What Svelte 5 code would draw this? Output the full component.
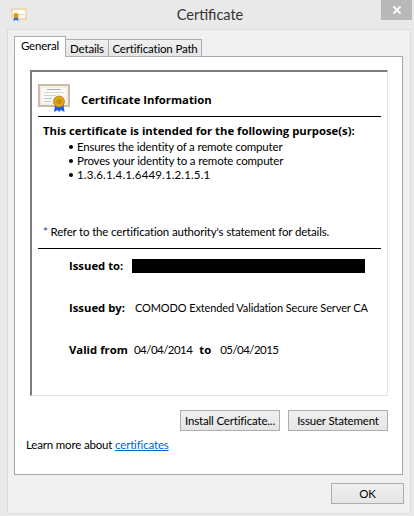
<script lang="ts">
	const purposes = [
		'Ensures the identity of a remote computer',
		'Proves your identity to a remote computer',
		'1.3.6.1.4.1.6449.1.2.1.5.1',
	];
</script>

<div class="dialog">
	<header class="titlebar">
		<svg class="title-icon" width="16" height="14" viewBox="0 0 16 14">
			<rect x="1" y="1" width="14" height="10" fill="#fdf6e8" stroke="#ecd3ab" stroke-width="1.5" />
			<rect x="7" y="3" width="6" height="2" fill="#fff" />
			<rect x="7" y="6" width="6" height="1" fill="#e8e0d0" />
			<path d="M3 9 L2.500 13 L5 12 L7.500 13 L7 9 Z" fill="#3a6fd8" />
			<circle cx="5" cy="7.500" r="2.500" fill="#dc9a14" />
		</svg>
		<span class="title">Certificate</span>
		<button class="close" aria-label="Close">
			<svg width="10" height="10" viewBox="0 0 10 10">
				<path d="M1.500 1.500 L8.500 8.500 M8.500 1.500 L1.500 8.500" stroke="#fff" stroke-width="1.800" />
			</svg>
		</button>
	</header>

	<div class="panel">
		<div class="tabs">
			<span class="tab active">General</span>
			<span class="tab details">Details</span>
			<span class="tab path">Certification Path</span>
		</div>

		<section class="page">
			<div class="box">
				<div class="info-head">
					<svg class="cert-icon" width="33" height="29" viewBox="0 0 33 29">
						<rect x="1" y="1" width="30" height="21" fill="#f7f5ef" stroke="#c9bda6" stroke-width="2" />
						<rect x="3" y="3" width="26" height="17" fill="#fbfaf7" stroke="#e2dccd" stroke-width="0.600" />
						<rect x="9" y="5" width="14" height="1" fill="#aab0bd" />
						<rect x="6" y="8" width="20" height="1" fill="#d8d8d8" />
						<rect x="6" y="11" width="12" height="1" fill="#cfcfcf" />
						<rect x="6" y="14" width="8" height="1" fill="#b9c0cc" />
						<rect x="6" y="17" width="7" height="1" fill="#c5c5c5" />
						<path d="M17 21 L16 28 L19.500 26 L21 28 L23 26 L26.500 28 L25.500 21 Z" fill="#1f5be0" />
						<circle cx="21" cy="17.500" r="5.500" fill="#e0a516" stroke="#b9800f" stroke-width="0.800" />
						<circle cx="21" cy="17.500" r="2.500" fill="#c88a10" />
					</svg>
					<h2>Certificate Information</h2>
				</div>
				<hr />
				<div class="purpose">
					<h3>This certificate is intended for the following purpose(s):</h3>
					<ul>
						{#each purposes as p}
							<li>{p}</li>
						{/each}
					</ul>
				</div>
				<p class="note"><span class="star">*</span> Refer to the certification authority's statement for details.</p>
				<hr />
				<dl class="fields">
					<div class="field">
						<dt class="label">Issued to:</dt>
						<dd class="redacted"></dd>
					</div>
					<div class="field">
						<dt class="label">Issued by:</dt>
						<dd class="issuer-name">COMODO Extended Validation Secure Server CA</dd>
					</div>
					<div class="field">
						<dt class="label">Valid from</dt>
						<dd class="date">04/04/2014</dd>
						<dt class="to">to</dt>
						<dd class="date">05/04/2015</dd>
					</div>
				</dl>
			</div>

			<div class="actions">
				<button class="btn install">Install Certificate...</button>
				<button class="btn issuer">Issuer Statement</button>
			</div>
			<p class="learn">Learn more about <a href="#certificates">certificates</a></p>
		</section>

		<div class="footer">
			<button class="btn ok">OK</button>
		</div>
	</div>
</div>

<style>
	:global(body) {
		margin: 0;
		background: #e9e9e9;
	}
	.dialog {
		width: 414px;
		height: 516px;
		box-sizing: border-box;
		position: relative;
		overflow: hidden;
		font-family: Lato, Roboto, sans-serif;
		font-size: 11.5px;
		letter-spacing: -0.17px;
		color: #000;
		display: flex;
		flex-direction: column;
	}
	.titlebar {
		height: 29px;
		flex: none;
		display: flex;
		align-items: center;
		justify-content: center;
	}
	.title-icon {
		position: absolute;
		left: 11px;
		top: 8px;
	}
	.title {
		font-size: 14.5px;
		letter-spacing: 0;
		color: #333;
		margin-top: -1px;
		margin-left: 6px;
	}
	.close {
		position: absolute;
		left: 381px;
		top: 0;
		width: 31px;
		height: 20px;
		border: none;
		padding: 0;
		background: #b9b9b9;
		display: flex;
		align-items: center;
		justify-content: center;
	}
	.panel {
		margin: 0 3px 2px 7px;
		flex: 1;
		background: #f0f0f0;
		border: 1px solid #dcdcdc;
		padding: 7px 8px 0 6px;
		display: flex;
		flex-direction: column;
	}
	.tabs {
		display: flex;
		align-items: flex-end;
		height: 20px;
		position: relative;
		z-index: 1;
		margin-bottom: -1px;
	}
	.tab {
		height: 18px;
		box-sizing: border-box;
		line-height: 18px;
		text-align: center;
		border: 1px solid #adadad;
		border-left: none;
		background: linear-gradient(#f0f0f0, #e5e5e5);
		white-space: nowrap;
	}
	.tab.active {
		height: 21px;
		width: 52px;
		line-height: 17px;
		background: #fff;
		border: 1px solid #adadad;
		border-bottom: none;
	}
	.details {
		width: 43px;
	}
	.path {
		width: 93px;
	}
	.page {
		width: 389px;
		height: 419px;
		box-sizing: border-box;
		background: #fff;
		border: 1px solid #a6a6a6;
		padding: 13px 14px 0 15px;
	}
	.box {
		height: 326px;
		box-sizing: border-box;
		border-top: 2px solid #7d7d7d;
		border-left: 2px solid #7d7d7d;
		border-right: 1px solid #e3e3e3;
		border-bottom: 1px solid #e3e3e3;
		padding: 9px 6px 0 6px;
	}
	.info-head {
		display: flex;
		align-items: center;
		height: 35px;
	}
	.cert-icon {
		flex: none;
		margin-right: 10px;
	}
	h2,
	h3,
	.label,
	.to {
		font-family: "Open Sans", sans-serif;
		font-size: 11.3px;
		font-weight: 700;
		letter-spacing: 0;
		white-space: nowrap;
	}
	h2 {
		margin: 2px 0 0;
	}
	hr {
		margin: 0;
		border: none;
		border-top: 1px solid #000;
	}
	.purpose {
		height: 100px;
		padding-top: 6px;
		box-sizing: border-box;
	}
	h3 {
		margin: 0 0 0 5px;
		line-height: 16px;
	}
	ul {
		list-style: none;
		margin: 1px 0 0;
		padding: 0 0 0 31px;
	}
	li {
		line-height: 14px;
		position: relative;
		padding-left: 8px;
	}
	li:last-child {
		letter-spacing: 0.13px;
	}
	li::before {
		content: "";
		position: absolute;
		left: 0;
		top: 5px;
		width: 4px;
		height: 4px;
		border-radius: 50%;
		background: #000;
	}
	.note {
		margin: 0;
		height: 31px;
		padding-left: 5px;
		line-height: 30px;
	}
	.star {
		color: #1a3f8f;
	}
	.fields {
		margin: 0;
		padding: 8px 0 0 31px;
	}
	.field {
		display: flex;
		align-items: center;
		height: 16px;
		margin-bottom: 26px;
		white-space: nowrap;
	}
	.label {
		width: 63px;
		flex: none;
	}
	dd {
		margin: 0;
		white-space: nowrap;
	}
	.redacted {
		width: 233px;
		height: 14px;
		background: #000;
		margin-top: 1px;
	}
	.issuer-name {
		margin-left: 3px;
		font-size: 11px;
		letter-spacing: -0.12px;
	}
	.date {
		margin-left: 2px;
		letter-spacing: -0.55px;
	}
	.to {
		margin: 0 7px;
	}
	.actions {
		display: flex;
		justify-content: flex-end;
		gap: 8px;
		margin-top: 14px;
	}
	.btn {
		font: inherit;
		letter-spacing: inherit;
		color: #000;
		height: 21px;
		padding: 0;
		box-sizing: border-box;
		border: 1px solid #adadad;
		white-space: nowrap;
		background: linear-gradient(#f0f0f0, #e5e5e5);
	}
	.install,
	.issuer {
		width: 100px;
	}
	.learn {
		margin: 6px 0 0 -4px;
		line-height: 16px;
	}
	a {
		color: #0066cc;
	}
	.footer {
		display: flex;
		justify-content: flex-end;
		margin: 8px -2px 0 0;
	}
	.ok {
		width: 73px;
	}
</style>
